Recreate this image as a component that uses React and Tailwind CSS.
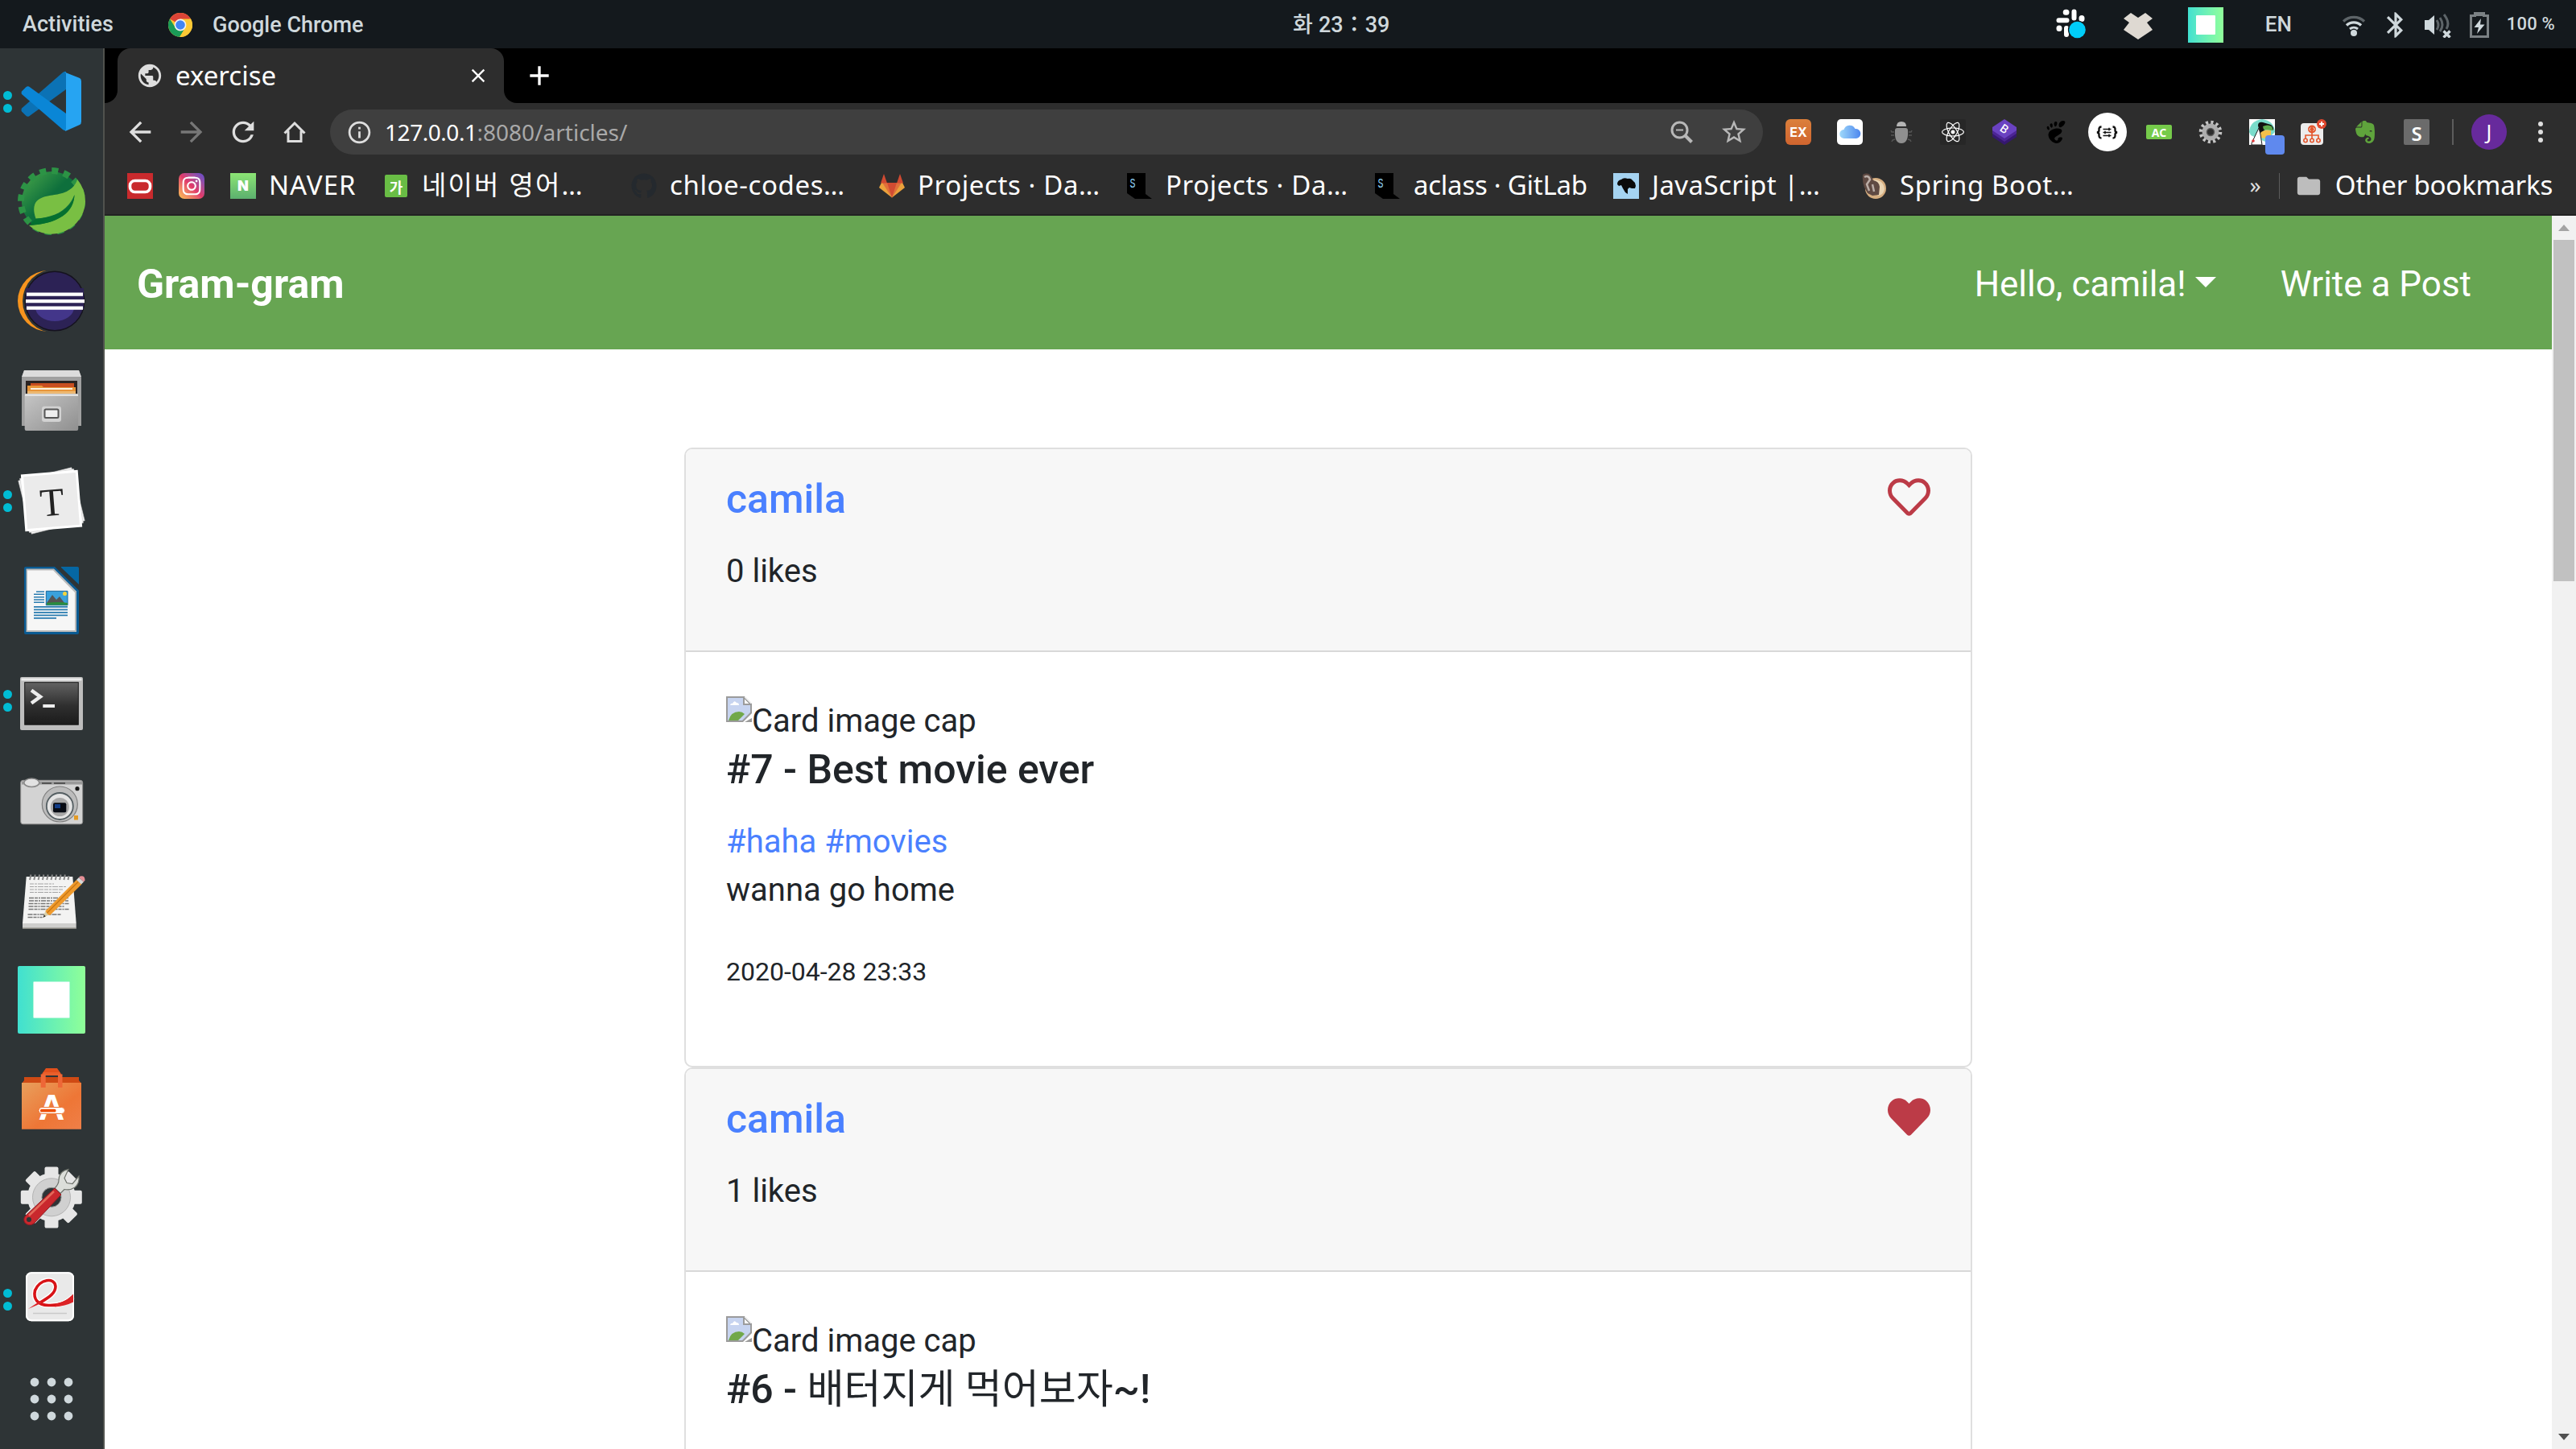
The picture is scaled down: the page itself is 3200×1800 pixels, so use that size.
import {
  MdArrowBack,
  MdArrowForward,
  MdRefresh,
  MdInfoOutline,
  MdStarBorder,
  MdPublic,
  MdClose,
  MdAdd,
  MdBluetooth,
  MdFolder,
} from 'react-icons/md';
import { FaRegHeart, FaHeart, FaGithub, FaInstagram, FaEvernote, FaReact } from 'react-icons/fa';
import { SiGnome } from 'react-icons/si';

/* ---------- Top panel ---------- */

function ChromeLogo() {
  return (
    <svg viewBox="0 0 30 30" className="h-[30px] w-[30px]">
      <circle cx="15" cy="15" r="15" fill="#fbc934" />
      <path d="M15 15 2 7.5A15 15 0 0 1 28 7.5H15z" fill="#dc4437" />
      <path d="M2 7.5A15 15 0 0 0 14.5 30L21 18.5 15 22 9 18.5z" fill="#1a9c57" />
      <path d="M28 7.6A15 15 0 0 1 14 30L21.5 18 20 9z" fill="#fdc935" />
      <circle cx="15" cy="15" r="7.4" fill="#f3f3f3" />
      <circle cx="15" cy="15" r="5.8" fill="#4285f4" />
    </svg>
  );
}

function SlackIcon() {
  return (
    <svg viewBox="0 0 40 40" className="h-10 w-10">
      <g stroke="#fff" strokeWidth="6" strokeLinecap="round">
        <path d="M24.5 4.5v8M5.5 15.3h10M15 25v8" />
        <path d="M14.200 5.200h.800M34 12.600v.800M6 25v.400" strokeWidth="7" />
      </g>
      <circle cx="28.5" cy="27" r="11.6" fill="#14191d" />
      <circle cx="28.5" cy="27" r="10.3" fill="#00cdf8" />
    </svg>
  );
}

function WifiIcon() {
  return (
    <svg viewBox="0 0 28 26" className="h-[26px] w-7" fill="none">
      <path d="M1 7.5a19 19 0 0 1 26 0" stroke="#5d6468" strokeWidth="3.2" />
      <path d="M5 12.5a13 13 0 0 1 18 0" stroke="#cfd8dc" strokeWidth="3.4" />
      <path d="M9 17a8 8 0 0 1 10 0" stroke="#cfd8dc" strokeWidth="3" />
      <circle cx="14" cy="22" r="4" fill="#cfd8dc" />
    </svg>
  );
}

function VolumeIcon() {
  return (
    <svg viewBox="0 0 33 30" className="h-[30px] w-[33px]" fill="none">
      <path d="M0 8h5l7-6v24l-7-6H0z" fill="#cfd8dc" />
      <path d="M15 8q4 6 0 12M19 5q6 9 0 17M24 1q8 10 3 18" stroke="#5d6468" strokeWidth="3" />
      <path d="M23.5 21.500l8 8m0-8-8 8" stroke="#cfd8dc" strokeWidth="3.4" />
    </svg>
  );
}

function BatteryIcon() {
  return (
    <svg viewBox="0 0 24 32" className="h-8 w-6" fill="none">
      <path d="M1.500 4.500h5v-3h11v3h5v26h-21z" stroke="#7b8184" strokeWidth="3" />
      <path d="M5 1h14v4H5z" fill="#7b8184" />
      <path d="M14 8 5.500 19H11l-2 8 9.500-11.500H13z" fill="#cfd8dc" />
    </svg>
  );
}

function GradientSquare({ className }) {
  return (
    <div className={`flex items-center justify-center bg-linear-to-r from-[#40e0d0] to-[#90ff98] ${className}`}>
      <div className="h-[55%] w-[55%] rounded-[1px] bg-white" />
    </div>
  );
}

function TopPanel() {
  return (
    <header className="flex h-[60px] shrink-0 items-center bg-[#14191d] text-[27px] leading-[60px] font-medium text-[#cfd8dc]">
      <div className="flex w-[1606px] items-center">
        <span className="w-[181px] pl-[28px] tracking-[0.05px]">Activities</span>
        <span className="w-[83px] pl-[28px] pt-0.5">
          <ChromeLogo />
        </span>
        <span className="pt-0.5">Google Chrome</span>
      </div>
      <div className="flex pt-0.5">
        <span className="w-[32px]">화</span>
        <span>23：39</span>
      </div>
      <div className="ml-auto flex items-center pr-[26px]">
        <SlackIcon />
        <svg viewBox="0 0 36 33" className="mt-1 ml-[46px] h-[33px] w-9">
          <path d="M9 0l9 6 9-6 9 7-7 5 7 9-18 12L0 21l7-9-7-5z" fill="#ded9d2" />
        </svg>
        <GradientSquare className="ml-11 mt-0.5 h-11 w-11" />
        <span className="ml-[52px] w-[96px] text-[26px]">EN</span>
        <span className="mt-1">
          <WifiIcon />
        </span>
        <MdBluetooth className="mt-0.5 ml-[19px] size-[38px] text-[#cfd8dc]" />
        <span className="mt-1 ml-[17px]">
          <VolumeIcon />
        </span>
        <span className="mt-0.5 ml-[23px]">
          <BatteryIcon />
        </span>
        <span className="ml-[22px] text-[22px] leading-[58px] tracking-[0.2px]">100 %</span>
      </div>
    </header>
  );
}

/* ---------- Dock ---------- */

function CodeIcon() {
  return (
    <>
      <path d="M5 50.500 56 6q3-2 4-1v22L14 60.500q-2 1-4-1l-5-5q-1-2 0-4z" fill="#0b72b5" />
      <path d="M5 33 56 77q3 2 4 1V57L14 23.500q-2-1-4 1l-5 5q-1 2 0 3.500z" fill="#0a86d6" />
      <path d="M58 5.500 77 13q2 1 2 4v50q0 3-2 4l-18 8 1-3V7z" fill="#26a4f2" />
    </>
  );
}

function SpringIcon() {
  return (
    <>
      <defs>
        <linearGradient id="sg" x1="0" y1="0" x2="1" y2="1">
          <stop offset="0" stopColor="#4aa84a" />
          <stop offset=".45" stopColor="#0e6f3c" />
          <stop offset="1" stopColor="#0e6f3c" />
        </linearGradient>
      </defs>
      <circle cx="42" cy="42" r="37" fill="url(#sg)" />
      <circle cx="42" cy="42" r="38" fill="none" stroke="#2c9345" strokeWidth="8" strokeDasharray="8 6.920" />
      <path d="M74 15A42 42 0 0 1 84 42 42 42 0 0 1 14 72C50 70 69 56 70.500 34 62 55 44 62 22.500 63.500 12 34 40 36 51 33 66 30 72 22 74 15z" fill="#79bf43" />
      <path d="M70.500 34C66 54 46 62 22 64L14 72C52 70 70 55 70.500 34z" fill="#04702f" />
    </>
  );
}

function EclipseIcon() {
  return (
    <>
      <circle cx="38" cy="42" r="38" fill="#f7941e" />
      <circle cx="45.500" cy="42" r="39.500" fill="#2e3436" />
      <circle cx="46" cy="42" r="37.500" fill="#15121f" />
      <circle cx="46" cy="42" r="36" fill="#2c2255" />
      <ellipse cx="46" cy="50" rx="24" ry="17" fill="#43368a" />
      <path d="M10 26h72v26H10z" fill="#2c2255" />
      <path d="M11 31.500h70v4.200H11zM10 40h73v4.200H10zM11 48.500h70v4.200H11z" fill="#fff" />
    </>
  );
}

function FilesIcon() {
  return (
    <>
      <defs>
        <linearGradient id="fg" x1="0" y1="0" x2="1" y2="1">
          <stop offset="0" stopColor="#c6c6c6" />
          <stop offset="1" stopColor="#8f8f8f" />
        </linearGradient>
      </defs>
      <path d="M8 4h68l3 9v60H5V13z" fill="#a0a0a0" />
      <path d="M8 4h68l3 8H5z" fill="#dcdcdc" />
      <path d="M10 17h64v18H10z" fill="#2b2321" />
      <path d="M16 20h54v6H16z" fill="#c94e1f" />
      <path d="M12 23h18l2 2h40v10H12z" fill="#e8963a" />
      <path d="M16 26h52v2H16z" fill="#fbeede" />
      <path d="M12 30h60v4H12z" fill="#edb871" />
      <rect x="8.700" y="33" width="66.500" height="46" rx="2" fill="url(#fg)" />
      <path d="M9 33.500h66v2.500H9z" fill="#e2e2e2" />
      <rect x="30" y="48.700" width="24" height="19.300" rx="3" fill="#d2d2d2" />
      <rect x="33.500" y="52.500" width="17" height="10.500" rx="1.500" fill="#eee" stroke="#555" strokeWidth="2" />
    </>
  );
}

function TyporaIcon() {
  return (
    <>
      <g transform="rotate(-14 42 42)">
        <rect x="8" y="8" width="68" height="68" fill="#f4f4f4" stroke="#cfcfcf" strokeWidth=".6" />
      </g>
      <g transform="rotate(-10 42 42)">
        <rect x="8" y="8" width="68" height="68" fill="#f4f4f4" stroke="#cfcfcf" strokeWidth=".6" />
      </g>
      <g transform="rotate(-4.500 42 42)">
        <rect x="8" y="8" width="68" height="68" fill="#ebebeb" stroke="#fff" strokeWidth="3" />
        <text x="42.500" y="60.500" textAnchor="middle" fontSize="49" fill="#222" className="font-['Liberation_Serif',serif]">
          T
        </text>
      </g>
    </>
  );
}

function WriterIcon() {
  return (
    <>
      <path d="M10 0h36l30 29.500V82q0 2-2 2H10q-2 0-2-2V2q0-2 2-2z" fill="#0a5a92" />
      <path d="M10.500 2.500H45l28 28V81H10.500z" fill="#b9b9b9" />
      <path d="M12 4.500h32L71 32v47H12z" fill="#f6f6f6" />
      <path d="M54 0h20q2 0 2 2v20L54 1z" fill="#0667a3" />
      <g fill="#2a7cb0">
        <path d="M23 30.300h10v1.500H23zM20 33.600h13v1.500H20zM20 37h13v1.500H20zM20 40.300h13v1.500H20zM20 43.600h13v1.500H20z" />
        <path d="M20 49h42v1.700H20zM20 52.500h42v1.700H20zM20 56h42v1.700H20zM20 59.500h42v1.700H20zM20 63h28v1.700H20z" />
      </g>
      <path d="M35.300 30.300H62v17.500H35.300z" fill="#3aa1dc" stroke="#15669c" strokeWidth="1" />
      <circle cx="58.500" cy="33.500" r="2.500" fill="#f5d33c" />
      <path d="m36 45 7-10 5 6 4-4 6 8z" fill="#555" />
      <path d="M36 45q14-2 26 0v2.500H36z" fill="#2b8c3d" />
    </>
  );
}

function TerminalIcon() {
  return (
    <>
      <defs>
        <linearGradient id="tg" x1="0" y1="0" x2="0" y2="1">
          <stop offset="0" stopColor="#636363" />
          <stop offset=".55" stopColor="#2f2f2f" />
          <stop offset="1" stopColor="#1b1b1b" />
        </linearGradient>
      </defs>
      <rect x="3" y="13" width="78" height="66" rx="2" fill="#bdbdbd" />
      <path d="M4.500 14.500h75v3h-75z" fill="#ececec" />
      <rect x="8.700" y="19.700" width="66.600" height="52.500" fill="url(#tg)" stroke="#1a1a1a" strokeWidth="1" />
      <path d="m17 29.500 11 8-11 8" fill="none" stroke="#eee" strokeWidth="4.500" />
      <path d="M31.300 47H46v4H31.300z" fill="#eee" />
    </>
  );
}

function CameraIcon() {
  return (
    <>
      <rect x="3.700" y="17.300" width="77" height="54.500" rx="3" fill="#d3d3d3" stroke="#8c8c8c" strokeWidth="1" />
      <path d="M5 18.500h75v4H5z" fill="#9a9a9a" />
      <path d="M30 20h12v2H30zM45 20h14v2H45z" fill="#555" />
      <ellipse cx="17.300" cy="20.300" rx="9.500" ry="5.200" fill="#e2e2e2" stroke="#888" strokeWidth="1.500" />
      <circle cx="52.300" cy="47" r="22" fill="#bcbcbc" stroke="#7f7f7f" strokeWidth="1.200" />
      <circle cx="52.300" cy="49.500" r="16.500" fill="#e4e4e4" stroke="#555f63" strokeWidth="1.800" />
      <circle cx="52.300" cy="50.500" r="11.500" fill="#a8a8a8" />
      <rect x="44" y="45.300" width="16.300" height="12" rx="2" fill="#070b14" />
      <path d="M46 47h7v5h-7z" fill="#123c86" />
      <circle cx="74" cy="27.700" r="2.600" fill="#161616" />
      <path d="M70 61h5v5.500h-5z" fill="#e39a25" />
    </>
  );
}

function EditorIcon() {
  return (
    <>
      <path d="M10.700 13h57.600l4.400 58H6z" fill="#f3f3f2" />
      <path d="M6 71h66.700v6.500H6z" fill="#cfcfcd" />
      <path d="M6 76.500h66.700V78H6z" fill="#85857f" />
      <path d="M15 17l1.500-6.500M20.300 17l1.500-6.500M25.600 17l1.500-6.500M30.900 17l1.500-6.500M36.200 17l1.500-6.500M41.500 17l1.500-6.500M46.800 17l1.500-6.500M52.100 17l1.500-6.500M57.400 17l1.500-6.500M62.500 17l1-5" stroke="#8a8a8a" strokeWidth="2" />
      <g stroke="#a5a5a5" strokeWidth="1.200" strokeDasharray="5 1 3 1 7 1">
        <path d="M15 22h30M15 25.500h45M15 29h42M15 32.500h38" />
      </g>
      <g stroke="#777" strokeWidth="1.300" strokeDasharray="6 1 4 1 2 1">
        <path d="M14 39.500h49M14 43h49M13.500 46.500h50M13.500 50h45M13.500 53.500h50M12.500 60h42M12.500 63.500h18" />
      </g>
      <path d="m31.300 64 3.200-8.500 5 4.500z" fill="#d9cfa8" />
      <path d="m31.300 64 1.500-3.800 2 2z" fill="#333" />
      <path d="M34.500 55.500 73 17l6.500 5.500L40 61q-3-.500-5.500-5.500z" fill="#ef9a2c" />
      <path d="M36.500 58 75 19.500" stroke="#c97714" strokeWidth="1.500" />
      <path d="m73 17 3-3 6 5.500-3 3z" fill="#d9d9d9" />
      <path d="m76 14 1.500-1.500q6-1.500 6 5L82 19.500z" fill="#e58f97" />
    </>
  );
}

function SoftwareIcon() {
  return (
    <>
      <defs>
        <linearGradient id="bg1" x1="0" y1="0" x2="1" y2="1">
          <stop offset="0" stopColor="#e89f5c" />
          <stop offset=".6" stopColor="#ee7636" />
          <stop offset="1" stopColor="#ef7f48" />
        </linearGradient>
      </defs>
      <path d="M8 14h68v4l3 4H5l3-4z" fill="#cf4a14" />
      <path d="M5 21h74v57.700H5z" fill="url(#bg1)" />
      <path d="M28.700 12 35 3h14l6.300 9H50l-3-3.500H37L34 12z" fill="#e2501c" />
      <path d="M31.500 8h21v4h-21z" fill="#ea5f2b" />
      <path d="M28.700 10.500h6V27h-6zM50 10.500h5.500V27H50z" fill="#ee6737" />
      <text x="42" y="67" textAnchor="middle" fontSize="45" fill="#fff" className="font-['Liberation_Sans',sans-serif] font-bold">
        A
      </text>
      <rect x="26" y="51.500" width="32.500" height="8" rx="4" fill="#fff" stroke="#ee7636" strokeWidth="1" />
      <rect x="28" y="53.700" width="19.500" height="3.700" rx="1.500" fill="#ee4f06" />
    </>
  );
}

function SettingsIcon() {
  return (
    <>
      <g fill="#e6e6e6">
        <circle cx="42" cy="39.300" r="30" />
        <rect x="33.500" y="1.500" width="17" height="76" rx="2" />
        <rect x="33.500" y="1.500" width="17" height="76" rx="2" transform="rotate(45 42 39.300)" />
        <rect x="33.500" y="1.500" width="17" height="76" rx="2" transform="rotate(90 42 39.300)" />
        <rect x="33.500" y="1.500" width="17" height="76" rx="2" transform="rotate(135 42 39.300)" />
      </g>
      <circle cx="42" cy="39.300" r="23.500" fill="#d0d0d0" stroke="#b3b3b3" strokeWidth="1" />
      <circle cx="42" cy="39.300" r="12" fill="#2e3436" stroke="#8b8b8b" strokeWidth="1" />
      <path d="M46 28q5-5 5-10 0-11 12-13.500l-5 11 3 6 7 1 8-9.500q1 9-5 14-6 4-13 2.500l-5 5z" fill="#dcdeda" stroke="#6f736d" strokeWidth="1.200" />
      <path d="M46 28 54 36 20 72q-6 4-11-1-3-5 1-9z" fill="#c9282d" stroke="#8f1a22" strokeWidth="1" />
      <path d="M45 32 14 62" stroke="#e36a59" strokeWidth="2.500" />
      <circle cx="14" cy="67" r="3" fill="#2e3436" />
    </>
  );
}

function ReaderIcon() {
  return (
    <>
      <rect x="10" y="8.300" width="60" height="61" rx="7" fill="#e9e9e9" />
      <rect x="11" y="9.300" width="58" height="59" rx="6" fill="none" stroke="#fff" strokeWidth="2" />
      <path d="M28 46C40 39 47 34 47 26 46 14 27 17 21.500 31 19 42 25 49 38 49.500 52 50 62 46 68 39" fill="none" stroke="#fff" strokeWidth="6.500" />
      <path d="M28 46C40 39 47 34 47 26 46 14 27 17 21.500 31 19 42 25 49 38 49.500 52 50 62 46 68 39" fill="none" stroke="#d81317" strokeWidth="3.600" />
      <path d="M13 54 28 44l2 2.500zM46 51.500q13-1 23-6V35.500q-8 9-21 12z" fill="#dc2226" />
      <path d="M19 59.500h42" stroke="#c9c9c9" strokeWidth="1.500" />
    </>
  );
}

function SquareIcon() {
  return (
    <>
      <defs>
        <linearGradient id="sq">
          <stop offset="0" stopColor="#40e0d0" />
          <stop offset="1" stopColor="#90ff98" />
        </linearGradient>
      </defs>
      <rect width="84" height="84" rx="2" fill="url(#sq)" />
      <rect x="19.500" y="19.500" width="45" height="45" rx="1" fill="#fff" stroke="#b5f7dc" strokeWidth="1" />
    </>
  );
}

function GridIcon() {
  return (
    <g fill="#cfd8dc">
      {[21, 42, 63].map((y) => [21, 42, 63].map((x) => <circle key={`${x}-${y}`} cx={x} cy={y} r="5.400" />))}
    </g>
  );
}

const dockApps = [
  { name: 'code', Icon: CodeIcon, running: true },
  { name: 'spring', Icon: SpringIcon },
  { name: 'eclipse', Icon: EclipseIcon },
  { name: 'files', Icon: FilesIcon },
  { name: 'typora', Icon: TyporaIcon, running: true },
  { name: 'writer', Icon: WriterIcon },
  { name: 'terminal', Icon: TerminalIcon, running: true },
  { name: 'camera', Icon: CameraIcon },
  { name: 'editor', Icon: EditorIcon },
  { name: 'square', Icon: SquareIcon },
  { name: 'software', Icon: SoftwareIcon },
  { name: 'settings', Icon: SettingsIcon },
  { name: 'reader', Icon: ReaderIcon, running: true },
  { name: 'grid', Icon: GridIcon },
];

function Dock() {
  return (
    <nav className="flex w-[130px] shrink-0 flex-col border-r-2 border-[#50524e] bg-[#2e3436] pt-1">
      {dockApps.map(({ name, Icon, running }) => (
        <div key={name} className="flex h-[124px] shrink-0 items-center">
          <div className="flex w-[22px] flex-col gap-[5px] pl-1">
            {running && (
              <>
                <i className="h-[11px] w-[11px] rounded-full bg-[#00bcd4]" />
                <i className="h-[11px] w-[11px] rounded-full bg-[#00bcd4]" />
              </>
            )}
          </div>
          <svg viewBox="0 0 84 84" className="h-[84px] w-[84px] overflow-visible">
            <Icon />
          </svg>
        </div>
      ))}
    </nav>
  );
}

/* ---------- Browser chrome ---------- */

function TabStrip() {
  return (
    <div className="flex h-[68px] shrink-0 bg-[#2d2d2d] text-white">
      <div className="w-4 rounded-br-[16px] bg-black" />
      <div className="w-[480px] bg-black">
        <div className="flex h-full items-center rounded-t-[16px] bg-[#2d2d2d] pl-[23px]">
          <MdPublic className="size-[34px] text-[#dedede]" />
          <span className="ml-[15px] text-[33px] leading-[68px]">exercise</span>
          <MdClose className="mr-[18px] ml-auto size-7" />
        </div>
      </div>
      <div className="flex flex-1 items-center rounded-bl-[16px] bg-black pl-6">
        <MdAdd className="size-10" />
      </div>
    </div>
  );
}

function ExtensionIcon({ children, className = '' }) {
  return <div className={`flex h-12 w-16 shrink-0 items-center justify-center ${className}`}>{children}</div>;
}

function Extensions() {
  return (
    <div className="flex items-center pl-3">
      <ExtensionIcon>
        <span className="flex h-8 w-8 items-center justify-center rounded-[6px] bg-linear-to-b from-[#db7f3b] to-[#d0652f] font-['Inter',sans-serif] text-[16px] font-bold text-white">
          EX
        </span>
      </ExtensionIcon>
      <ExtensionIcon>
        <svg viewBox="0 0 32 32" className="h-8 w-8">
          <defs>
            <linearGradient id="cl">
              <stop offset="0" stopColor="#9fd9fa" />
              <stop offset="1" stopColor="#4d86ee" />
            </linearGradient>
          </defs>
          <rect width="32" height="32" rx="5" fill="#fff" />
          <path d="M9 24a5.500 5.500 0 0 1-.500-11A7.500 7.500 0 0 1 22.500 12a6 6 0 0 1 1.500 12z" fill="url(#cl)" />
        </svg>
      </ExtensionIcon>
      <ExtensionIcon>
        <svg viewBox="0 0 32 32" className="h-8 w-8">
          <path d="M10 9q0-6 6-6t6 6z" fill="#b5b5b5" />
          <path d="M8 14q0-3 3-3h10q3 0 3 3 1 16-8 16T8 14z" fill="#8f8f8f" />
          <path d="M7 16H4l-1-2M7 20H3M8 25l-3 1-1 2M25 16h3l1-2M25 20h4M24 25l3 1 1 2" fill="none" stroke="#555" strokeWidth="1.500" />
        </svg>
      </ExtensionIcon>
      <ExtensionIcon>
        <span className="flex h-8 w-8 items-center justify-center rounded-[2px] bg-[#272727]">
          <FaReact className="size-7 text-white" />
        </span>
      </ExtensionIcon>
      <ExtensionIcon>
        <svg viewBox="0 0 32 32" className="h-8 w-8">
          <path d="m1 19 15-8 15 8v3l-15 10L1 22z" fill="#35186e" />
          <path d="m1 14 15-6 15 6v4L16 28 1 18z" fill="#4c2596" />
          <path d="M16 0 31 10v4L16 24 1 14v-4z" fill="#6a42c1" />
          <text x="16" y="17" textAnchor="middle" fontSize="14" fill="#fff" transform="rotate(35 16 12)" className="font-['Inter',sans-serif] font-medium">
            B
          </text>
        </svg>
      </ExtensionIcon>
      <ExtensionIcon>
        <SiGnome className="size-7 text-black" />
      </ExtensionIcon>
      <ExtensionIcon>
        <svg viewBox="0 0 48 48" className="h-12 w-12">
          <circle cx="24" cy="24" r="24" fill="#fff" />
          <path d="M16.500 17.500q-3.500 0-3 4 .300 2.500-2.500 3 2.800.500 2.500 3-.500 4 3 4M30.500 17.500q3.500 0 3 4-.300 2.500 2.500 3-2.800.500-2.500 3 .500 4-3 4" fill="none" stroke="#111" strokeWidth="2.400" />
          <path d="M18.500 20.500h10M18.500 24.500h10M18.500 28.500h10M26 18.800v3.400M21 22.800v3.400M26 26.800v3.400" stroke="#111" strokeWidth="1.600" />
        </svg>
      </ExtensionIcon>
      <ExtensionIcon>
        <span className="flex h-[18px] w-8 items-center justify-center rounded-[2px] bg-[#76cb4b] text-[14px] font-bold text-white">
          AC
        </span>
      </ExtensionIcon>
      <ExtensionIcon>
        <svg viewBox="0 0 32 32" className="h-8 w-8" fill="none">
          <circle cx="16" cy="16" r="12" stroke="#c4c4c4" strokeWidth="4.500" strokeDasharray="3.100 3.183" />
          <circle cx="16" cy="16" r="7.500" stroke="#adadad" strokeWidth="6" />
          <circle cx="16" cy="16" r="4.500" stroke="#5a5a5a" strokeWidth="1.500" />
        </svg>
      </ExtensionIcon>
      <ExtensionIcon className="relative">
        <svg viewBox="0 0 32 32" className="h-8 w-8">
          <path d="M0 0h32v32H0z" fill="#fff" />
          <path d="M0 16Q1 2 16 0q15 2 16 16l-12 12L2 20z" fill="#7adccb" />
          <path d="M11 8q0-5 6-4l10 3q4 3 3 7l-9-2-7 6-4 2 2-8z" fill="#111" />
          <path d="M17 9q6-3 11 0l2 5-12-1z" fill="#5cab4c" />
          <path d="M14 17q5-5 13-3v7l-6 3-8-1z" fill="#f5c04a" />
          <path d="M3 30 12 11l2 8 2 13H3z" fill="#fff" stroke="#222" strokeWidth="1" />
          <circle cx="5" cy="27" r="1.800" fill="#e03a3a" />
        </svg>
        <span className="absolute top-7 left-9 h-6 w-6 rounded-[4px] bg-[#5f89ee]" />
      </ExtensionIcon>
      <ExtensionIcon>
        <svg viewBox="0 0 32 32" className="h-8 w-8 overflow-visible">
          <rect x="0" y="5" width="28" height="27" rx="4" fill="#ececec" />
          <circle cx="14" cy="12.500" r="5" fill="#e4572e" />
          <path d="m12.500 10.500-2 2 2 2M15.500 10.500l2 2-2 2" fill="none" stroke="#ececec" strokeWidth="1" />
          <path d="M14 17v7M6 24v-4h16v4" fill="none" stroke="#e4572e" strokeWidth="1.600" />
          <g fill="none" stroke="#e4572e" strokeWidth="1.600">
            <circle cx="6" cy="26.500" r="2.200" />
            <circle cx="14" cy="26.500" r="2.200" />
            <circle cx="22" cy="26.500" r="2.200" />
          </g>
          <circle cx="26" cy="6" r="6" fill="#e0492f" />
          <path d="M26 3v6M23 6h6" stroke="#fff" strokeWidth="2" />
        </svg>
      </ExtensionIcon>
      <ExtensionIcon>
        <FaEvernote className="size-8 text-[#5fa43c]" />
      </ExtensionIcon>
      <ExtensionIcon>
        <span className="flex h-8 w-8 items-end justify-center rounded-[2px] bg-[#6b6b6b] pb-0.5 text-[24px] leading-6 font-semibold text-white">
          S
        </span>
      </ExtensionIcon>
      <div className="ml-[12px] h-8 w-0.5 bg-[#5c5c5c]" />
      <span className="ml-[22px] flex h-11 w-11 items-center justify-center rounded-full bg-[#672a9c] text-[25px] text-white">
        J
      </span>
      <div className="ml-[39px] flex flex-col gap-[4px]">
        <i className="h-1.5 w-1.5 rounded-full bg-[#dedede]" />
        <i className="h-1.5 w-1.5 rounded-full bg-[#dedede]" />
        <i className="h-1.5 w-1.5 rounded-full bg-[#dedede]" />
      </div>
    </div>
  );
}

function Toolbar() {
  return (
    <div className="flex h-[72px] shrink-0 items-center bg-[#2d2d2d] pl-6 text-[#dedede]">
      <div className="flex w-64 items-center gap-6">
        <MdArrowBack className="size-10" />
        <MdArrowForward className="size-10 text-[#777]" />
        <MdRefresh className="size-10" />
        <svg viewBox="0 0 40 40" className="size-10" fill="none" stroke="#dedede" strokeWidth="3">
          <path d="M7.500 21.500 20 9l12.500 12.500M12 18.500v13h16v-13" />
        </svg>
      </div>
      <div className="flex h-14 w-[1780px] items-center rounded-full bg-[#3f3f3f] pr-[18px] pl-[20px] text-[28px] leading-14">
        <MdInfoOutline className="size-[33px]" />
        <span className="ml-[15px] tracking-[-0.45px] text-white">127.0.0.1</span>
        <span className="text-[#a9a9a9]">:8080/articles/</span>
        <svg viewBox="0 0 40 40" className="ml-auto size-10" fill="none" stroke="#b8b8b8" strokeWidth="3">
          <circle cx="17.500" cy="17.500" r="9.500" />
          <path d="M13 17.500h9" strokeWidth="2" />
          <path d="m24.500 24.500 8 8" strokeWidth="4" />
        </svg>
        <MdStarBorder className="ml-[27px] size-[36px] text-[#b8b8b8]" />
      </div>
      <Extensions />
    </div>
  );
}

function GitlabIcon() {
  return (
    <svg viewBox="0 0 32 32" className="h-8 w-8">
      <path d="M16 30.500 0 18l3-6h26l3 6z" fill="#eba23c" />
      <path d="M16 30.500 4 12h24z" fill="#e0703b" />
      <path d="m16 30.500-6-18.500h12z" fill="#d14b32" />
      <path d="M6 1 2 12.500h8zM26 1l4 11.500h-8z" fill="#cf4a32" />
    </svg>
  );
}

function ScriptIcon() {
  return (
    <svg viewBox="0 0 32 32" className="h-8 w-8">
      <path d="M0 0h23v26l8 6H10L0 25z" fill="#000" />
      <text x="3.500" y="18" fontSize="17" fill="#8fd0f5" className="font-['Liberation_Mono',monospace]" textLength="7" lengthAdjust="spacingAndGlyphs">
        S
      </text>
    </svg>
  );
}

function OracleIcon() {
  return (
    <svg viewBox="0 0 32 32" className="h-8 w-8">
      <path d="M0 0h32v32H0z" fill="#c92a2d" />
      <rect x="3.500" y="9.500" width="25" height="14" rx="6" fill="none" stroke="#fff" strokeWidth="3.600" />
    </svg>
  );
}

function InstagramBadge() {
  return (
    <span className="flex h-8 w-8 items-center justify-center rounded-[7px] bg-linear-to-tr from-[#fbc34f] via-[#e0396b] to-[#5b46cf]">
      <FaInstagram className="size-[26px] text-white" />
    </span>
  );
}

function NaverIcon() {
  return (
    <span className="flex h-8 w-8 items-center justify-center bg-linear-to-b from-[#8ce574] to-[#5cb06e] font-['Inter',sans-serif] text-[18px] font-black text-white">
      N
    </span>
  );
}

function DictionaryIcon() {
  return (
    <span className="mx-0.5 flex h-7 w-7 items-center justify-center rounded-[2px] bg-[#69bd45] pt-1 text-[18px] leading-6 font-bold text-white">
      가
    </span>
  );
}

function LionIcon() {
  return (
    <svg viewBox="0 0 32 32" className="h-8 w-8">
      <path d="M0 0h32v32H0z" fill="#a5d3f1" />
      <path d="M5 14q0-5 5-6 3-3 8-1 4-1 6 2l3 3 1 4-1 3h-4l-3-1-2 2v6l-3-2-3-5-2-4-3 1z" fill="#0a0a0a" />
    </svg>
  );
}

function PortraitIcon() {
  return (
    <svg viewBox="0 0 32 32" className="h-8 w-8">
      <ellipse cx="18" cy="19" rx="13" ry="13" fill="#d6ae80" />
      <path d="M16 8q12 1 13 12-2 8-8 8l-8-6z" fill="#ead5b4" />
      <path d="M2 2q7-4 11 3l2 4q7 1 8 8l-1 10-8 1-6-3-4-7q-3-9-2-16z" fill="#5f4a43" />
      <path d="M4 5q5-3 7 3l-4 6 3 8M14 14l2 9" fill="none" stroke="#b9aca6" strokeWidth="2.500" />
    </svg>
  );
}

/* Each entry carries its own slot width and letter spacing. */
const bookmarks = [
  { id: 'oracle', icon: <OracleIcon />, slot: 'w-16' },
  { id: 'instagram', icon: <InstagramBadge />, slot: 'w-16' },
  { id: 'naver', icon: <NaverIcon />, slot: 'w-[190px]', label: 'NAVER', text: 'tracking-[1px]' },
  { id: 'dict', icon: <DictionaryIcon />, slot: 'w-[308px]', label: '네이버 영어…', text: 'tracking-[2.2px]' },
  { id: 'github', icon: <FaGithub className="size-8 text-[#24292e]" />, slot: 'w-[308px]', label: 'chloe-codes…', text: 'tracking-[0.6px]' },
  { id: 'gitlab', icon: <GitlabIcon />, slot: 'w-[308px]', label: 'Projects · Da…', text: 'tracking-[0.6px]' },
  { id: 'script1', icon: <ScriptIcon />, slot: 'w-[308px]', label: 'Projects · Da…', text: 'tracking-[0.6px]' },
  { id: 'script2', icon: <ScriptIcon />, slot: 'w-[296px]', label: 'aclass · GitLab', text: 'tracking-[-0.25px]' },
  { id: 'js', icon: <LionIcon />, slot: 'w-[308px]', label: 'JavaScript |…', text: 'tracking-[0.4px]' },
  { id: 'spring', icon: <PortraitIcon />, slot: 'w-[308px]', label: 'Spring Boot…', text: 'tracking-[0.6px]' },
];

function BookmarksBar() {
  return (
    <div className="flex h-[68px] shrink-0 items-center border-b-2 border-[#222] bg-[#2d2d2d] pb-1 pl-7 text-[33px] leading-[60px] text-white">
      {bookmarks.map(({ id, icon, slot, label, text }) => (
        <div key={id} className={`flex shrink-0 items-center gap-4 ${slot}`}>
          {icon}
          {label && <span className={`pb-0.5 whitespace-nowrap ${text}`}>{label}</span>}
        </div>
      ))}
      <div className="ml-auto flex items-center pr-[29px]">
        <span className="pb-1 text-[28px] leading-[56px] text-[#dedede]">»</span>
        <div className="ml-[22px] h-8 w-px bg-[#5c5c5c]" />
        <MdFolder className="ml-[19px] size-[34px] text-[#bdbdbd]" />
        <span className="ml-[16px] pb-0.5 tracking-[-0.2px]">Other bookmarks</span>
      </div>
    </div>
  );
}

/* ---------- Page ---------- */

function BrokenImage() {
  return (
    <svg viewBox="0 0 32 32" className="h-8 w-8 shrink-0">
      <path d="M0 0h23l9 9v12L21 32H0z" fill="#9b9b9b" />
      <path d="M2 2h19v8h9v10L20 30H2z" fill="#c7d4f0" />
      <path d="M5 11q1-3 3-2 2-5 5-1 3 0 3 3z" fill="#fff" />
      <path d="M3 30q3-11 13-11 4 0 7 3l-8 8z" fill="#71a84a" />
      <path d="M23 0v9h9z" fill="#fff" />
      <path d="M22 1v9h9" fill="none" stroke="#9b9b9b" strokeWidth="2" />
      <path d="M22 1.500 30.500 10" stroke="#9b9b9b" strokeWidth="1.500" />
      <path d="M32 27v5h-9z" fill="#9b9b9b" />
    </svg>
  );
}

function PageNav() {
  return (
    <nav className="flex h-[166px] shrink-0 items-center bg-[#67a552] pt-1 pr-[100px] pl-10 text-[44px] text-white">
      <a className="text-[50px] font-bold">Gram-gram</a>
      <a className="ml-auto flex items-center">
        Hello, camila!
        <i className="mb-[5px] ml-[11px] border-x-[13.5px] border-t-[13.5px] border-x-transparent border-t-white" />
      </a>
      <a className="ml-20">Write a Post</a>
    </nav>
  );
}

const posts = [
  {
    id: 7,
    author: 'camila',
    likes: '0 likes',
    Heart: FaRegHeart,
    title: '#7 - Best movie ever',
    tags: ['#haha', '#movies'],
    body: 'wanna go home',
    date: '2020-04-28 23:33',
  },
  {
    id: 6,
    author: 'camila',
    likes: '1 likes',
    Heart: FaHeart,
    title: (
      <>
        #6 - <span className="font-normal">배터지게 먹어보자</span>~!
      </>
    ),
    tags: [],
  },
];

function PostCard({ post }) {
  const { Heart } = post;
  return (
    <article className="h-[770px] shrink-0 rounded-[10px] border-2 border-[#dfdfdf] bg-white text-[40px] leading-[60px] text-[#212529]">
      <div className="flex h-[252px] justify-between rounded-t-[8px] border-b-2 border-[#d8d8d8] bg-[#f7f7f7] px-[50px] pt-8">
        <div>
          <h5 className="text-[50px] font-medium text-[#4a80ff]">{post.author}</h5>
          <p className="mt-[30px]">{post.likes}</p>
        </div>
        <Heart className="mt-px size-[53px] text-[#bc3b47]" />
      </div>
      <div className="px-[50px] pt-[55px]">
        <div className="flex">
          <BrokenImage />
          <span className="pt-px">Card image cap</span>
        </div>
        <h5 className="h-[60px] text-[50px] font-medium">{post.title}</h5>
        <p className="mt-[30px] text-[#4a80ff]">{post.tags.join(' ')}</p>
        <p>{post.body}</p>
        <p className="mt-[47px] text-[32px] leading-[48px]">{post.date}</p>
      </div>
    </article>
  );
}

function Scrollbar() {
  return (
    <div className="flex w-[30px] shrink-0 flex-col items-center bg-[#f1f1f1]">
      <div className="flex h-[30px] items-center">
        <i className="border-x-[7px] border-b-[8px] border-x-transparent border-b-[#a3a3a3]" />
      </div>
      <div className="h-[424px] w-[26px] bg-[#c1c1c1]" />
      <div className="mt-auto flex h-[30px] items-center">
        <i className="border-x-[7px] border-t-[8px] border-x-transparent border-t-[#505050]" />
      </div>
    </div>
  );
}

export default function App() {
  return (
    <div className="flex h-[1800px] w-[3200px] flex-col overflow-hidden bg-white font-['Roboto','Noto_Sans_CJK_KR',sans-serif]">
      <TopPanel />
      <div className="flex min-h-0 flex-1">
        <Dock />
        <main className="flex min-w-0 flex-1 flex-col">
          <div className="font-['Noto_Sans','Noto_Sans_CJK_KR',sans-serif]">
            <TabStrip />
            <Toolbar />
            <BookmarksBar />
          </div>
          <div className="flex min-h-0 flex-1">
            <div className="flex flex-1 flex-col overflow-hidden">
              <PageNav />
              <section className="mx-auto flex w-[1600px] flex-col pt-[122px]">
                {posts.map((post) => (
                  <PostCard key={post.id} post={post} />
                ))}
              </section>
            </div>
            <Scrollbar />
          </div>
        </main>
      </div>
    </div>
  );
}
